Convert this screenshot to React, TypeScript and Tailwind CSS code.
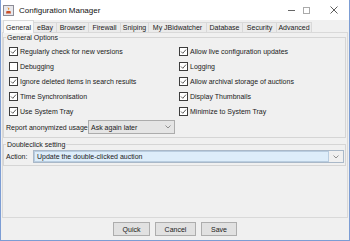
const tabs = [
  { label: "General", w: "w-[31px]", active: true },
  { label: "eBay", w: "w-[23px]" },
  { label: "Browser", w: "w-[32px]" },
  { label: "Firewall", w: "w-[32px]" },
  { label: "Sniping", w: "w-[28px]" },
  { label: "My JBidwatcher", w: "w-[58px]" },
  { label: "Database", w: "w-[36px]" },
  { label: "Security", w: "w-[34px]" },
  { label: "Advanced", w: "w-[35px]" },
];

const left = [
  { label: "Regularly check for new versions", on: true },
  { label: "Debugging", on: false },
  { label: "Ignore deleted items in search results", on: true },
  { label: "Time Synchronisation", on: true },
  { label: "Use System Tray", on: true },
];

const right = [
  { label: "Allow live configuration updates", on: true },
  { label: "Logging", on: true },
  { label: "Allow archival storage of auctions", on: true },
  { label: "Display Thumbnails", on: true },
  { label: "Minimize to System Tray", on: true },
];

function Check({ on, label }: { on: boolean; label: string }) {
  return (
    <div className="h-[15px] flex items-center gap-[2px]">
      <svg width="9" height="9" viewBox="0 0 9 9" className="shrink-0">
        <rect x="0.5" y="0.5" width="8" height="8" fill="#fff" stroke="#3c3c3c" />
        {on && <polyline points="2,4.5 3.8,6.3 7,2.6" fill="none" stroke="#333" strokeWidth="0.8" />}
      </svg>
      <span className="whitespace-nowrap">{label}</span>
    </div>
  );
}

function Chevron() {
  return (
    <svg width="6" height="4" viewBox="0 0 6 4">
      <polyline points="0.5,0.5 3,3 5.5,0.5" fill="none" stroke="#777" strokeWidth="0.8" />
    </svg>
  );
}

export default function App() {
  return (
    <div className="w-[350px] h-[241px] flex flex-col bg-[#f0f0f0] border-x border-b border-[#7c9dd4] text-[7px] leading-[9px] text-[#1a1a1a] overflow-hidden" style={{ fontFamily: '"Liberation Sans", Arial, sans-serif' }}>
      {/* title bar */}
      <div className="h-[20px] shrink-0 bg-white flex items-center">
        <svg width="11" height="11" viewBox="0 0 11 11" className="ml-[2px]">
          <rect x="0.5" y="0.5" width="10" height="10" fill="#e8e8ec" stroke="#8c8c96" />
          <path d="M3 8.5 L8 8.5 L7.5 6 L3.5 6 Z" fill="#c94f2a" />
          <path d="M5.5 5.5 L4.5 2 L6.5 3.5 Z" fill="#e8902c" />
        </svg>
        <span className="ml-[5px] text-[8px] text-[#111]">Configuration Manager</span>
        <div className="ml-auto flex items-center">
          <div className="w-[7px] h-px bg-[#666] mr-[8px]" />
          <div className="w-[7px] h-[7px] border border-[#aaa] mr-[20px]" />
          <svg width="8" height="8" viewBox="0 0 8 8" className="mr-[11px]">
            <path d="M0.5 0.5 L7.5 7.5 M7.5 0.5 L0.5 7.5" stroke="#333" strokeWidth="0.8" />
          </svg>
        </div>
      </div>

      {/* tabs */}
      <div className="h-[12px] shrink-0 flex items-end pl-[2px] relative z-10">
        {tabs.map((t) =>
          t.active ? (
            <div key={t.label} className={`${t.w} h-[13px] -mb-px bg-[#fafafa] border border-b-0 border-[#d9d9d9] flex items-center justify-center`}>
              {t.label}
            </div>
          ) : (
            <div key={t.label} className={`${t.w} h-[10px] bg-[#ebebeb] border border-l-0 border-b-0 border-[#d9d9d9] flex items-center justify-center whitespace-nowrap`}>
              {t.label}
            </div>
          )
        )}
      </div>

      {/* panel */}
      <div className="h-[186px] shrink-0 mx-px border border-[#d9d9d9] bg-[#f0f0f0] pr-px">
        <fieldset className="border border-[#d5d5d5] px-[1px] pb-[3px]">
          <legend className="ml-px px-px leading-[9px]">General Options</legend>
          <div className="grid grid-cols-[170px_1fr] pl-[4px] mt-[2px]">
            <div className="flex flex-col">
              {left.map((c) => (
                <Check key={c.label} {...c} />
              ))}
            </div>
            <div className="flex flex-col">
              {right.map((c) => (
                <Check key={c.label} {...c} />
              ))}
            </div>
          </div>
          <div className="h-[14px] flex items-center pl-[1px] mt-px">
            <span className="w-[82px] whitespace-nowrap">Report anonymized usage</span>
            <div className="w-[87px] h-[14px] bg-[#e5e5e5] border border-[#acacac] flex items-center pl-[2px] pr-[3px]">
              <span>Ask again later</span>
              <span className="ml-auto"><Chevron /></span>
            </div>
          </div>
        </fieldset>

        <fieldset className="border border-[#d5d5d5] px-[1px] pb-[2px] mt-[2px]">
          <legend className="ml-px px-px leading-[9px]">Doubleclick setting</legend>
          <div className="h-[13px] flex items-center pl-[1px] mt-px">
            <span className="w-[27px] whitespace-nowrap">Action:</span>
            <div className="flex-1 h-[13px] flex border border-[#a9b8c8] bg-[#f0f0f0]">
              <div className="flex-1 bg-[#ddedfa] border border-[#b9cde0] flex items-center pl-[2px]">
                Update the double-clicked auction
              </div>
              <div className="w-[14px] flex items-center justify-center">
                <Chevron />
              </div>
            </div>
          </div>
        </fieldset>
      </div>

      {/* buttons */}
      <div className="pt-[4px] flex justify-center gap-[5px]">
        <button className="w-[37px] h-[14px] bg-[#e1e1e1] border border-[#adadad] flex items-center justify-center">Quick</button>
        <button className="w-[41px] h-[14px] bg-[#e1e1e1] border border-[#adadad] flex items-center justify-center">Cancel</button>
        <button className="w-[36px] h-[14px] bg-[#e1e1e1] border border-[#adadad] flex items-center justify-center">Save</button>
      </div>
    </div>
  );
}
